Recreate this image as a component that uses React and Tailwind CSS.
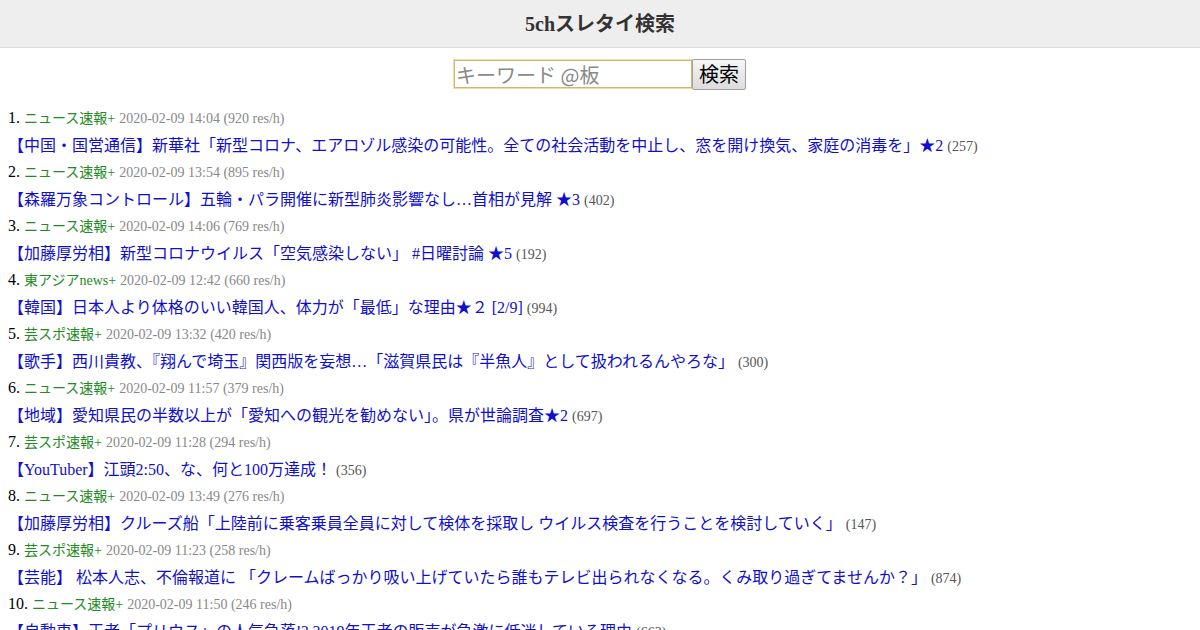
import React from "react";

const items = [
  ["ニュース速報+", "2020-02-09 14:04", "920", "【中国・国営通信】新華社「新型コロナ、エアロゾル感染の可能性。全ての社会活動を中止し、窓を開け換気、家庭の消毒を」★2", "257"],
  ["ニュース速報+", "2020-02-09 13:54", "895", "【森羅万象コントロール】五輪・パラ開催に新型肺炎影響なし…首相が見解 ★3", "402"],
  ["ニュース速報+", "2020-02-09 14:06", "769", "【加藤厚労相】新型コロナウイルス「空気感染しない」 #日曜討論 ★5", "192"],
  ["東アジアnews+", "2020-02-09 12:42", "660", "【韓国】日本人より体格のいい韓国人、体力が「最低」な理由★２ [2/9]", "994"],
  ["芸スポ速報+", "2020-02-09 13:32", "420", "【歌手】西川貴教、『翔んで埼玉』関西版を妄想…「滋賀県民は『半魚人』として扱われるんやろな」", "300"],
  ["ニュース速報+", "2020-02-09 11:57", "379", "【地域】愛知県民の半数以上が「愛知への観光を勧めない」。県が世論調査★2", "697"],
  ["芸スポ速報+", "2020-02-09 11:28", "294", "【YouTuber】江頭2:50、な、何と100万達成！", "356"],
  ["ニュース速報+", "2020-02-09 13:49", "276", "【加藤厚労相】クルーズ船「上陸前に乗客乗員全員に対して検体を採取し ウイルス検査を行うことを検討していく」", "147"],
  ["芸スポ速報+", "2020-02-09 11:23", "258", "【芸能】 松本人志、不倫報道に 「クレームばっかり吸い上げていたら誰もテレビ出られなくなる。くみ取り過ぎてませんか？」", "874"],
  ["ニュース速報+", "2020-02-09 11:50", "246", "【自動車】王者「プリウス」の人気急落!? 2019年王者の販売が急激に低迷している理由", "663"],
];

export default function App() {
  return (
    <div className="h-[630px] bg-white text-black overflow-hidden">
      <div className="font-['Liberation_Serif','Noto_Sans_CJK_JP',serif]">
        <header className="h-[48px] bg-[#eeeeee] border-b border-[#dddddd] flex items-center justify-center">
          <h1 className="text-[20px] font-bold text-[#333333] leading-none">5chスレタイ検索</h1>
        </header>
        <form className="flex justify-center items-center pt-[2px] h-[50px]" onSubmit={(e) => e.preventDefault()}>
          <input
            type="text"
            placeholder="キーワード @板"
            className="w-[238px] h-[28px] border border-[#d8b56a] outline outline-1 outline-[#f0dca8] px-[1px] text-[20px] leading-none placeholder:text-[#8a8a8a] font-['Noto_Sans_CJK_JP',sans-serif] bg-white"
          />
          <button
            type="submit"
            className="h-[31px] px-[6px] border border-[#a0a0a0] rounded-[2px] bg-gradient-to-b from-[#f6f6f6] to-[#dcdcdc] text-[20px] leading-none font-['Noto_Sans_CJK_JP',sans-serif]"
          >
            検索
          </button>
        </form>
        <ol className="px-[8px] pt-[7px]">
          {items.map((it, i) => (
            <li key={i}>
              <div className="h-[26px] flex items-center whitespace-nowrap">
                <span className="text-[16px] mr-[4px]">{i + 1}.</span>
                <span className="text-[14px] text-[#228b22] mr-[4px]">{it[0]}</span>
                <span className="text-[14px] text-[#888888]">{it[1]} ({it[2]} res/h)</span>
              </div>
              <div className="h-[28px] pt-[2px] flex items-center whitespace-nowrap">
                <a href="#" className="text-[16px] text-[#1010cc] font-['Liberation_Serif','Noto_Sans_CJK_JP',sans-serif]">{it[3]}</a>
                <span className="text-[14px] text-[#555555] ml-[4px]">({it[4]})</span>
              </div>
            </li>
          ))}
        </ol>
      </div>
    </div>
  );
}
